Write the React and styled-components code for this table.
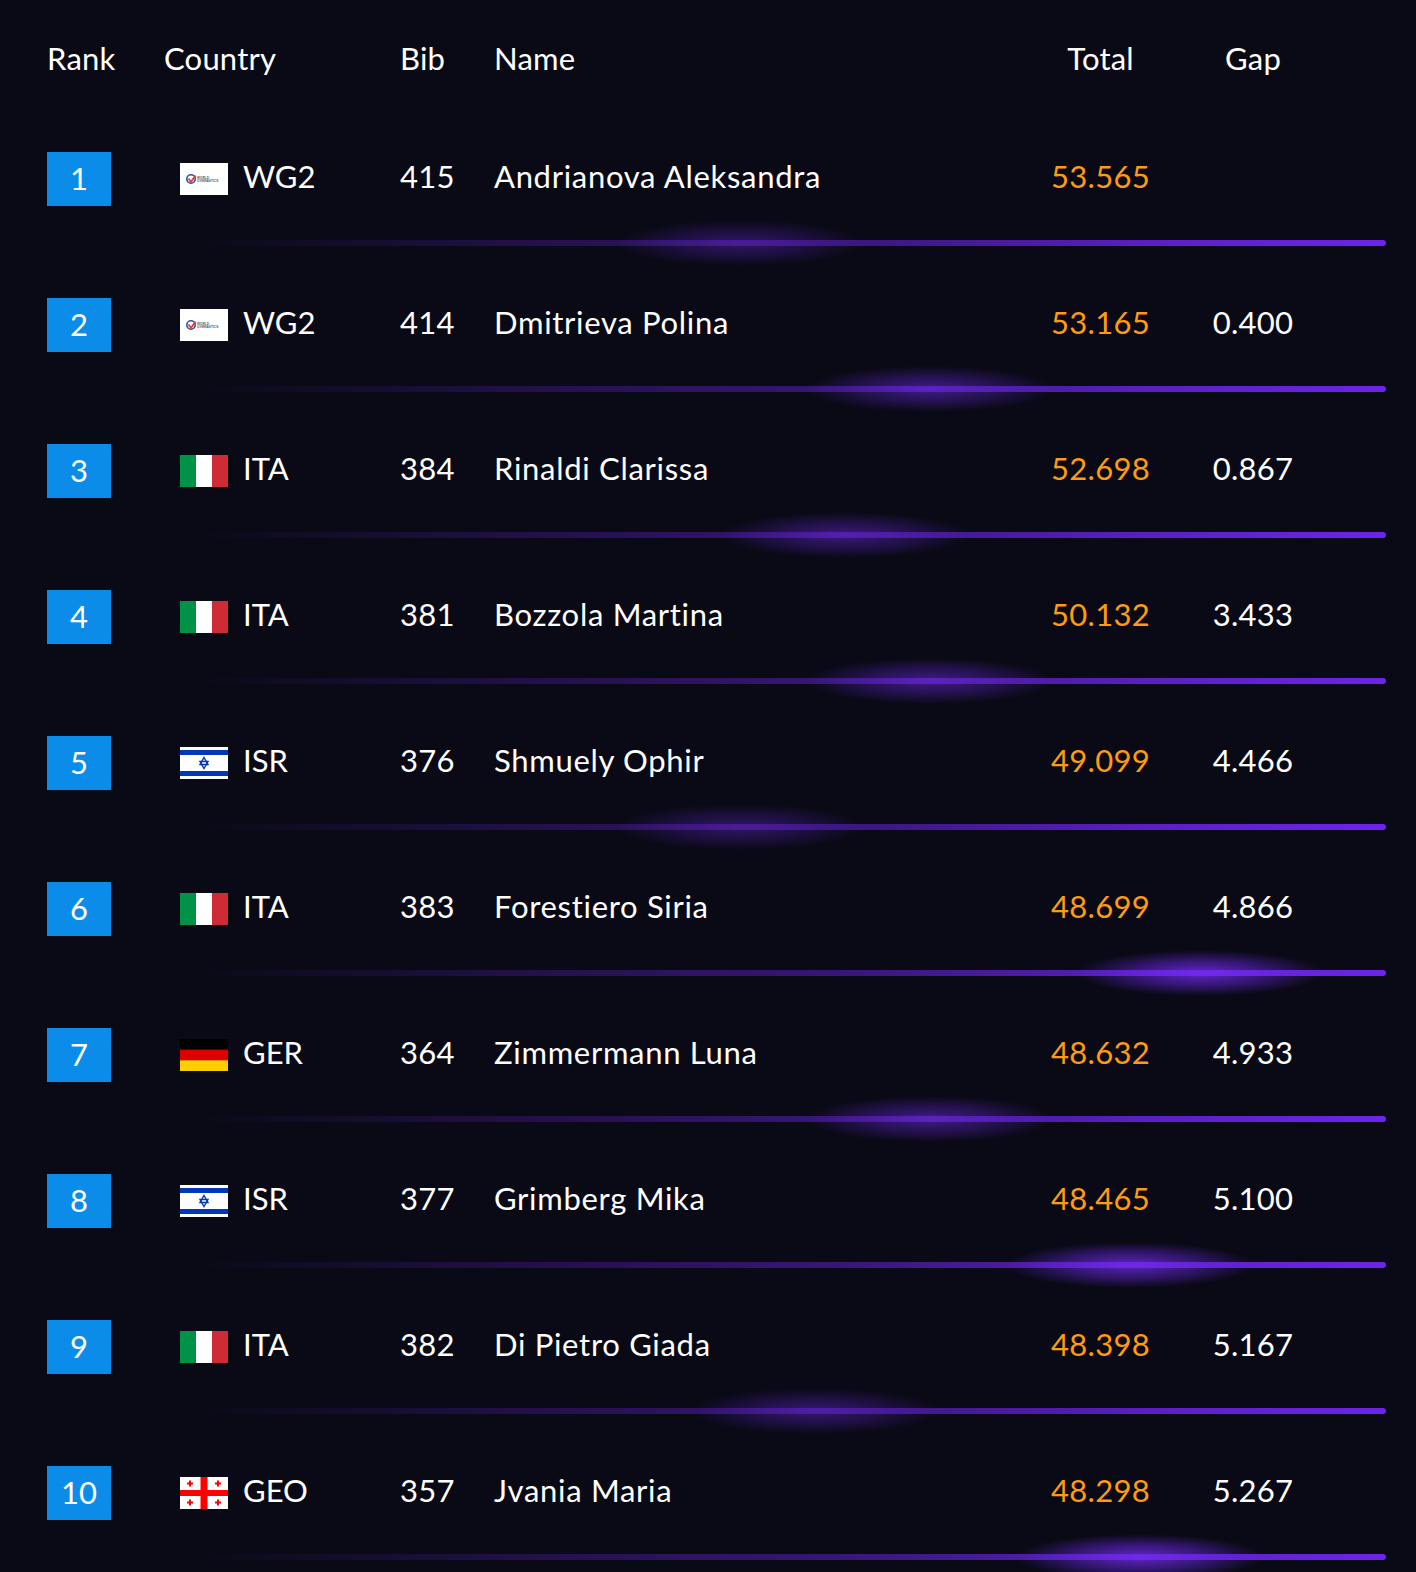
import React from "react";
import styled, { createGlobalStyle } from "styled-components";

const Global = createGlobalStyle`
  html, body { margin: 0; padding: 0; background: #0a0a16; }
  body { font-family: Lato, "Noto Sans", sans-serif; color: #ffffff; }
`;

const Page = styled.div`
  width: 1416px;
  min-height: 1572px;
  box-sizing: border-box;
  padding: 38px 30px 0 47px;
  background: #0a0a16;
`;

const cols = "117px 236px 94px 529px 155px 150px 1fr";

const HeaderRow = styled.div`
  display: grid;
  grid-template-columns: ${cols};
  align-items: center;
  height: 40px;
  margin-bottom: 74px;
  font-size: 31px;
  letter-spacing: 0.2px;
`;

const Cell = styled.div`
  display: flex;
  align-items: center;
  justify-content: ${(p) => (p.$center ? "center" : "flex-start")};
  color: ${(p) => p.$color || "#ffffff"};
  white-space: nowrap;
`;

const TextCell = styled(Cell)`
  padding-bottom: 7px;
  letter-spacing: ${(p) => (p.$wide ? "0.7px" : "0.3px")};
`;

const Block = styled.div`
  display: flex;
  flex-direction: column;
  height: 146px;
`;

const Row = styled.div`
  display: grid;
  grid-template-columns: ${cols};
  align-items: center;
  height: 54px;
  font-size: 31px;
`;

const RankBox = styled.div`
  width: 64px;
  height: 54px;
  box-sizing: border-box;
  padding-bottom: 3px;
  background: #0b8ce9;
  color: #ffffff;
  display: flex;
  align-items: center;
  justify-content: center;
  font-size: 31px;
`;

const CountryCell = styled.div`
  display: flex;
  align-items: center;
  gap: 15px;
  padding-left: 16px;
`;

const Code = styled.span`
  padding-bottom: 7px;
  letter-spacing: 0px;
`;

const FlagWrap = styled.svg`
  display: block;
  width: 48px;
  height: 32px;
  flex: none;
`;

const Divider = styled.div`
  position: relative;
  margin: 34px 0 0 153px;
  height: 6px;
  border-radius: 3px;
  background: linear-gradient(
    90deg,
    rgba(108, 36, 232, 0) 0%,
    rgba(108, 36, 232, 0.22) 25%,
    rgba(108, 36, 232, 0.48) 55%,
    rgba(108, 36, 232, 0.82) 80%,
    #6c24ea 100%
  );
`;

const Glow = styled.div`
  position: absolute;
  top: 50%;
  width: 250px;
  height: 46px;
  transform: translate(-50%, -50%);
  border-radius: 50%;
  background: radial-gradient(
    ellipse at center,
    rgba(118, 44, 245, ${(p) => p.$alpha}) 0%,
    rgba(110, 40, 240, ${(p) => p.$alpha * 0.5}) 40%,
    rgba(100, 30, 230, 0) 70%
  );
  pointer-events: none;
`;

const Flag = ({ code }) => {
  if (code === "ITA")
    return (
      <FlagWrap viewBox="0 0 48 32">
        <rect x="0" y="0" width="16" height="32" fill="#009246" />
        <rect x="16" y="0" width="16" height="32" fill="#ffffff" />
        <rect x="32" y="0" width="16" height="32" fill="#ce2b37" />
      </FlagWrap>
    );
  if (code === "GER")
    return (
      <FlagWrap viewBox="0 0 48 32">
        <rect x="0" y="0" width="48" height="11" fill="#000000" />
        <rect x="0" y="10.6" width="48" height="11" fill="#dd0000" />
        <rect x="0" y="21.3" width="48" height="10.7" fill="#ffce00" />
      </FlagWrap>
    );
  if (code === "ISR")
    return (
      <FlagWrap viewBox="0 0 48 32">
        <rect width="48" height="32" fill="#ffffff" />
        <rect y="3" width="48" height="5" fill="#0038b8" />
        <rect y="24" width="48" height="5" fill="#0038b8" />
        <polygon points="24,10.5 28,17.5 20,17.5" fill="none" stroke="#0038b8" strokeWidth="1.4" />
        <polygon points="24,21.5 28,14.5 20,14.5" fill="none" stroke="#0038b8" strokeWidth="1.4" />
      </FlagWrap>
    );
  if (code === "GEO") {
    const small = (cx, cy) => (
      <g key={`${cx}-${cy}`} fill="#ff0000">
        <rect x={cx - 3} y={cy - 1} width="6" height="2" />
        <rect x={cx - 1} y={cy - 3} width="2" height="6" />
      </g>
    );
    return (
      <FlagWrap viewBox="0 0 48 32">
        <rect width="48" height="32" fill="#ffffff" />
        <rect x="20.5" y="0" width="7" height="32" fill="#ff0000" />
        <rect x="0" y="13" width="48" height="6" fill="#ff0000" />
        {small(10, 6.5)}
        {small(38, 6.5)}
        {small(10, 25.5)}
        {small(38, 25.5)}
      </FlagWrap>
    );
  }
  return (
    <FlagWrap viewBox="0 0 48 32">
      <rect width="48" height="32" fill="#ffffff" />
      <circle cx="11" cy="16" r="4.2" fill="none" stroke="#2f4fa8" strokeWidth="1.6" />
      <path d="M8.5 15.5 L11 19 L15.5 12.5" fill="none" stroke="#e23a3a" strokeWidth="1.8" />
      <text x="17" y="15.6" fontSize="3.2" fill="#555a6a" fontFamily="Liberation Sans, sans-serif" fontWeight="bold">WORLD</text>
      <text x="17" y="19.2" fontSize="3.2" fill="#555a6a" fontFamily="Liberation Sans, sans-serif" fontWeight="bold">GYMNASTICS</text>
    </FlagWrap>
  );
};

const data = [
  { rank: 1, code: "WG2", bib: 415, name: "Andrianova Aleksandra", total: "53.565", gap: "", glow: 740, a: 0.35 },
  { rank: 2, code: "WG2", bib: 414, name: "Dmitrieva Polina", total: "53.165", gap: "0.400", glow: 930, a: 0.5 },
  { rank: 3, code: "ITA", bib: 384, name: "Rinaldi Clarissa", total: "52.698", gap: "0.867", glow: 845, a: 0.45 },
  { rank: 4, code: "ITA", bib: 381, name: "Bozzola Martina", total: "50.132", gap: "3.433", glow: 930, a: 0.5 },
  { rank: 5, code: "ISR", bib: 376, name: "Shmuely Ophir", total: "49.099", gap: "4.466", glow: 740, a: 0.35 },
  { rank: 6, code: "ITA", bib: 383, name: "Forestiero Siria", total: "48.699", gap: "4.866", glow: 1200, a: 0.8 },
  { rank: 7, code: "GER", bib: 364, name: "Zimmermann Luna", total: "48.632", gap: "4.933", glow: 930, a: 0.5 },
  { rank: 8, code: "ISR", bib: 377, name: "Grimberg Mika", total: "48.465", gap: "5.100", glow: 1130, a: 0.75 },
  { rank: 9, code: "ITA", bib: 382, name: "Di Pietro Giada", total: "48.398", gap: "5.167", glow: 815, a: 0.4 },
  { rank: 10, code: "GEO", bib: 357, name: "Jvania Maria", total: "48.298", gap: "5.267", glow: 1140, a: 0.8 },
];

export default function App() {
  return (
    <>
      <Global />
      <Page>
        <HeaderRow>
          <Cell>Rank</Cell>
          <Cell>Country</Cell>
          <Cell>Bib</Cell>
          <Cell>Name</Cell>
          <Cell $center>Total</Cell>
          <Cell $center>Gap</Cell>
          <Cell />
        </HeaderRow>
        {data.map((r) => (
          <Block key={r.rank}>
            <Row>
              <Cell>
                <RankBox>{r.rank}</RankBox>
              </Cell>
              <CountryCell>
                <Flag code={r.code} />
                <Code>{r.code}</Code>
              </CountryCell>
              <TextCell>{r.bib}</TextCell>
              <TextCell $wide>{r.name}</TextCell>
              <TextCell $center $color="#ff9b0f">{r.total}</TextCell>
              <TextCell $center>{r.gap}</TextCell>
              <Cell />
            </Row>
            <Divider>
              <Glow $alpha={r.a} style={{ left: `${r.glow - 200}px` }} />
            </Divider>
          </Block>
        ))}
      </Page>
    </>
  );
}
